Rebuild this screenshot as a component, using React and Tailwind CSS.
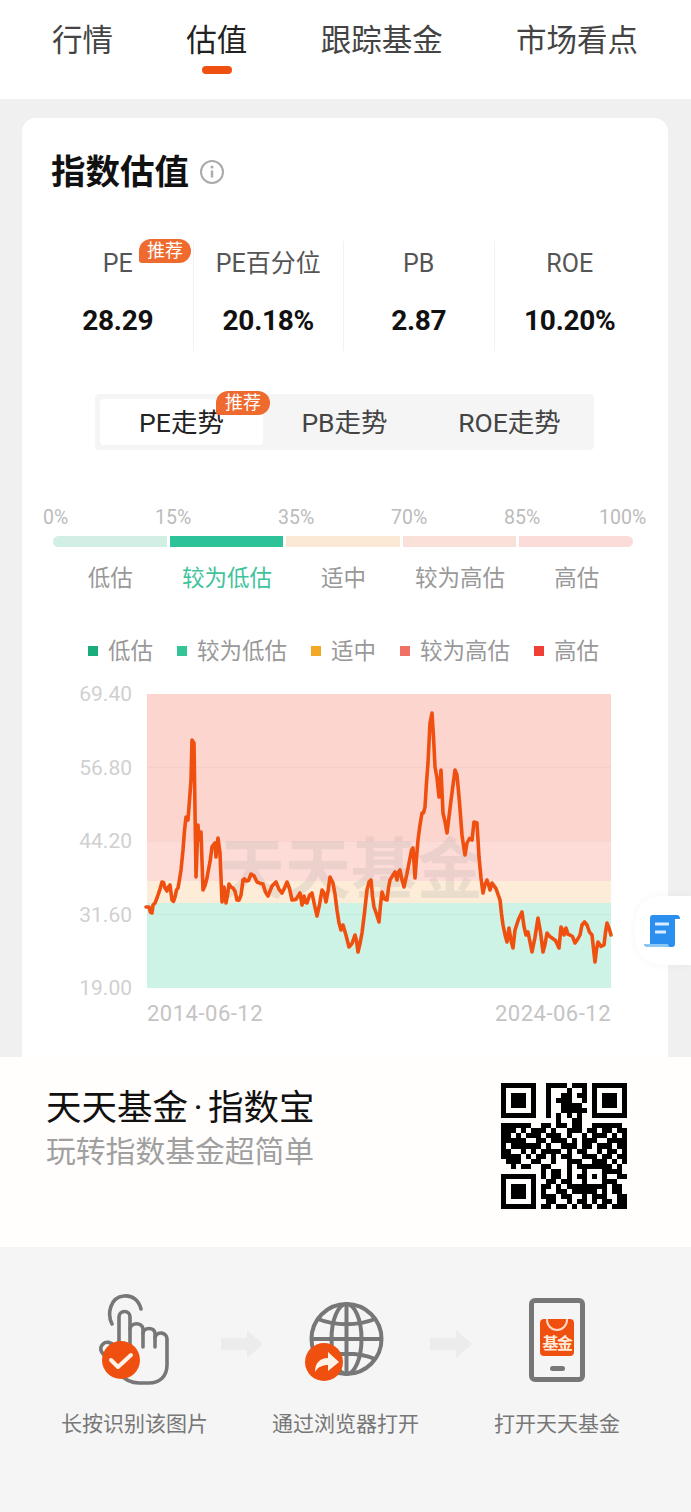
import React from 'react';

const font = "font-['Roboto','Noto_Sans_CJK_SC',sans-serif]";

const tabs = ['行情', '估值', '跟踪基金', '市场看点'];
const stats = [
    { label: 'PE', value: '28.29' },
    { label: 'PE百分位', value: '20.18%' },
    { label: 'PB', value: '2.87' },
    { label: 'ROE', value: '10.20%' },
];

const rawPoints = '146,907 149,907 152,913 153,905 157,898 162,882 165,888 167,891 170,885 172,900 175,897 178,888 181,870 183,850 186,817 188,820 191,780 192,740 194,743 196,877 198,825 199,840 201,832 203,890 207,878 208,872 212,847 215,843 216,857 218,838 220,853 222,902 224,887 226,903 229,884 233,888 237,900 241,895 243,880 246,881 251,874 257,882 263,884 268,896 276,882 282,893 287,882 292,900 300,893 302,905 304,896 307,903 312,893 317,916 322,890 326,902 330,877 333,883 337,910 341,930 343,925 349,947 355,935 358,952 362,933 367,890 371,880 374,907 379,922 382,892 387,900 390,880 395,872 397,880 400,870 404,887 410,858 413,848 415,878 418,840 422,813 425,807 428,763 430,723 432,713 435,767 437,778 439,797 441,770 443,813 447,833 455,770 457,775 462,835 465,855 467,843 472,840 474,822 477,823 479,857 483,893 487,880 490,890 492,883 500,900 503,925 507,942 509,928 513,948 515,930 522,912 526,935 528,932 532,952 538,918 543,952 547,933 552,938 559,948 561,927 564,935 566,928 570,935 575,943 580,935 582,925 587,925 592,935 595,962 598,942 604,945 607,923 611,935';

// break the longer segments up a little so the line looks like daily data
const linePoints = rawPoints
    .split(' ')
    .map((p) => p.split(',').map(Number))
    .flatMap(([x, y], i, all) => {
        const next = all[i + 1];
        if (!next || next[0] - x < 3) return [`${x},${y}`];
        const midY = (y + next[1]) / 2 + Math.sin(i * 2.3) * 3;
        return [`${x},${y}`, `${(x + next[0]) / 2},${midY.toFixed(1)}`];
    })
    .join(' ');

const F = ['1111111', '1000001', '1011101', '1011101', '1011101', '1000001', '1111111'];
const topMid = ['00111101110', '00100010010', '00100110110', '00101110010', '00100111100', '00100111110', '00101010100'];
const qrRows = [
    ...F.map((f, i) => f + topMid[i] + f),
    '0000000000010011000000000',
    '1111110011011011001111110',
    '1110101110100111011011011',
    '1101011101110100101110101',
    '1111100110111010111001111',
    '1011111101001110110111011',
    '1100101011110101100101101',
    '1111010110101100111011011',
    '0111001100100111001110101',
    '0010110011000101111111010',
    '0000000010110100100011110',
    F[0] + '0' + '10110101101010011',
    F[1] + '0' + '01101100100011100',
    F[2] + '0' + '11010111111110110',
    F[3] + '0' + '10011011111010110',
    F[4] + '0' + '11101100101110011',
    F[5] + '0' + '01100101101011011',
    F[6] + '0' + '11011010110110111',
];
const qrPath = qrRows
    .map((row, y) => row.split('').map((c, x) => (c === '1' ? `M${x} ${y}h1v1h-1z` : '')).join(''))
    .join('');

const Badge = ({ className }) => (
    <span className={`absolute flex items-center justify-center bg-[#ee6a2e] text-white text-[18px] leading-none rounded-[12px] rounded-bl-[3px] ${className}`}>
        推荐
    </span>
);

const Arrow = () => (
    <svg className="w-[42px] h-[28px]" viewBox="0 0 42 28">
        <path d="M0 8h26V0l16 14-16 14v-8H0z" fill="#ececec" />
    </svg>
);

const HandIcon = () => (
    <svg className="w-[78px] h-[94px]" viewBox="95 1295 78 94" fill="none">
        <g stroke="#777" strokeWidth="3.6" strokeLinecap="round" strokeLinejoin="round">
            <path d="M112 1325c-5-10-2-27 12-28 9-1 15 5 17 13" />
            <path d="M119 1350v-32a5.5 5.5 0 0 1 11 0v34" />
            <path d="M130 1330c1-7 12-7 13 0v18" />
            <path d="M143 1334c1-6 11-6 12 0v14" />
            <path d="M155 1338c2-6 12-5 12 2v26c0 12-8 18-18 18h-10c-8 0-14-3-19-9" />
            <path d="M109 1358c-7-2-11-8-6-13 3-3 8-2 12 2" />
        </g>
        <circle cx="121" cy="1361" r="19" fill="#f0500f" />
        <path d="M111 1361l7 7 13-12" stroke="#fff3e8" strokeWidth="4" strokeLinecap="round" strokeLinejoin="round" />
    </svg>
);

const GlobeIcon = () => (
    <svg className="w-[80px] h-[84px]" viewBox="304 1298 80 84" fill="none">
        <g stroke="#777" strokeWidth="4">
            <circle cx="346.500" cy="1338" r="35" />
            <ellipse cx="346.500" cy="1338" rx="15" ry="35" />
            <path d="M346.500 1303v70M311.500 1338h70M318 1318c17 7 40 7 57 0M318 1358c17-7 40-7 57 0" />
        </g>
        <circle cx="324" cy="1361" r="19" fill="#f0500f" />
        <path d="M315 1371c0-9 5-14 13-14v-6l11 10-11 9v-6c-6 0-10 2-13 7z" fill="#fff3e8" />
    </svg>
);

const PhoneIcon = () => (
    <div className="relative w-[56px] h-[84px] rounded-[6px] border-[5px] border-[#777] flex flex-col items-center">
        <div className="relative mt-[16px] w-[34px] h-[37px] rounded-[4px] bg-[#f0500f] overflow-hidden flex items-end justify-center">
            <span className="absolute top-[-10px] left-[6px] w-[22px] h-[22px] rounded-full border-[2px] border-[#ffd9c4]" />
            <span className="text-[16px] leading-[24px] font-bold text-[#ffe9d8] whitespace-nowrap tracking-[-1.500px]">基金</span>
        </div>
        <span className="mt-[10px] w-[15px] h-[5px] rounded-full bg-[#777]" />
    </div>
);

const App = () => {
    return (
        <div className={`relative w-[691px] h-[1512px] overflow-hidden bg-[#f0f0f0] ${font}`}>
            {/* Top tabs */}
            <div className="h-[99px] bg-white flex justify-between pl-[52px] pr-[53px] pt-[20px]">
                {tabs.map((tab) => (
                    <div key={tab} className="flex flex-col items-center">
                        <span className={`text-[30.500px] leading-[42px] ${tab === '估值' ? 'text-[#222]' : 'text-[#444]'}`}>{tab}</span>
                        {tab === '估值' && <span className="mt-[4px] w-[30px] h-[8px] rounded-full bg-[#f0500f]" />}
                    </div>
                ))}
            </div>

            {/* Card */}
            <div className="mt-[19px] ml-[22px] w-[646px] h-[939px] bg-white rounded-t-[14px] overflow-hidden">
                <div className="flex items-center gap-[10px] pl-[29px] pt-[31px]">
                    <h2 className="text-[34.500px] leading-[46px] font-bold text-[#111]">指数估值</h2>
                    <svg className="w-[26px] h-[26px]" viewBox="0 0 26 26" fill="none">
                        <circle cx="13" cy="13" r="11" stroke="#aaa" strokeWidth="2" />
                        <path d="M13 11.500v7" stroke="#aaa" strokeWidth="2.400" />
                        <circle cx="13" cy="8" r="1.500" fill="#aaa" />
                    </svg>
                </div>

                {/* Stats */}
                <div className="mt-[46px] ml-[21px] w-[602px] grid grid-cols-4 h-[110px]">
                    {stats.map((stat, i) => (
                        <div key={stat.label} className={`relative flex flex-col items-center pt-[6px] ${i < 3 ? 'border-r border-[#f2f2f2]' : ''}`}>
                            <span className="text-[25px] leading-[34px] text-[#555]">{stat.label}</span>
                            <span className="mt-[23px] text-[28px] leading-[34px] font-bold text-[#111] tracking-[-0.300px]">{stat.value}</span>
                            {i === 0 && <Badge className="top-[-2px] left-[96px] w-[52px] h-[24px]" />}
                        </div>
                    ))}
                </div>

                {/* Chart type switch */}
                <div className="relative mt-[43px] ml-[73px] w-[499px] h-[56px] bg-[#f5f5f5] rounded-[4px] p-[5px] grid grid-cols-3 text-[26.500px] text-[#444]">
                    <div className="bg-white rounded-[4px] flex items-center justify-center text-[#222] pt-[1px]">PE走势</div>
                    <div className="flex items-center justify-center pt-[1px]">PB走势</div>
                    <div className="flex items-center justify-center pt-[1px] pl-[4px]">ROE走势</div>
                    <Badge className="top-[-3px] left-[121px] w-[54px] h-[24px]" />
                </div>

                {/* Percent scale */}
                <div className="mt-[56px] ml-[21px] flex text-[19.500px] leading-[24px] text-[#bbb]">
                    <span className="w-[26px]">0%</span>
                    <span className="ml-[86px] w-[36px]">15%</span>
                    <span className="ml-[87px] w-[36px]">35%</span>
                    <span className="ml-[77px] w-[36px]">70%</span>
                    <span className="ml-[77px] w-[36px]">85%</span>
                    <span className="ml-[59px]">100%</span>
                </div>
                <div className="mt-[6px] ml-[31px] w-[580px] h-[11px] flex gap-[3px]">
                    <span className="flex-1 rounded-l-full bg-[#d1efe4]" />
                    <span className="flex-1 bg-[#2ec298]" />
                    <span className="flex-1 bg-[#fbe9d5]" />
                    <span className="flex-1 bg-[#f9e0d8]" />
                    <span className="flex-1 rounded-r-full bg-[#fbdcd8]" />
                </div>
                <div className="mt-[15px] ml-[30px] w-[583px] grid grid-cols-5 text-center text-[22.500px] leading-[32px] text-[#999]">
                    <span>低估</span>
                    <span className="text-[#3fc39c]">较为低估</span>
                    <span>适中</span>
                    <span>较为高估</span>
                    <span>高估</span>
                </div>

                {/* Legend */}
                <div className="mt-[41px] ml-[66px] flex gap-[24px] text-[22.500px] leading-[32px] text-[#999]">
                    {[
                        ['低估', 'bg-[#1bac7e]'],
                        ['较为低估', 'bg-[#33c497]'],
                        ['适中', 'bg-[#f2a926]'],
                        ['较为高估', 'bg-[#ef7065]'],
                        ['高估', 'bg-[#ee4035]'],
                    ].map(([label, color]) => (
                        <div key={label} className="flex items-center gap-[10px]">
                            <span className={`w-[10px] h-[10px] ${color}`} />
                            <span>{label}</span>
                        </div>
                    ))}
                </div>

                {/* Chart */}
                <div className="mt-[15px] flex">
                    <div className="w-[110px] h-[318px] flex flex-col justify-between items-end text-[21px] leading-[24px] text-[#d0d0d0]">
                        {['69.40', '56.80', '44.20', '31.60', '19.00'].map((v) => (
                            <span key={v}>{v}</span>
                        ))}
                    </div>
                    <div className="ml-[15px] w-[470px] mt-[12px]">
                        <div className="relative w-[470px] h-[294px]">
                            <svg className="absolute left-0 top-0 w-[470px] h-[294px] overflow-visible" viewBox="147 694 470 294" fill="none">
                                <rect x="147" y="694" width="464" height="147" fill="#fdd5cf" />
                                <rect x="147" y="841" width="464" height="40" fill="#fddcd8" />
                                <rect x="147" y="881" width="464" height="22" fill="#fcecd8" />
                                <rect x="147" y="903" width="464" height="85" fill="#cdf2e6" />
                                <path d="M147 767.500h464M147 841.500h464M147 914.500h464" stroke="#000" strokeOpacity="0.030" />
                            </svg>
                            <span className="absolute left-[72px] top-[142px] text-[66px] leading-[70px] font-bold text-[#8a8a8a]/15 whitespace-nowrap">天天基金</span>
                            <svg className="absolute left-0 top-0 w-[470px] h-[294px] overflow-visible" viewBox="147 694 470 294" fill="none">
                                <polyline points={linePoints} stroke="#ef5010" strokeWidth="3.600" strokeLinejoin="round" strokeLinecap="round" />
                            </svg>
                        </div>
                        <div className="mt-[13px] w-[464px] flex justify-between text-[22px] leading-[26px] text-[#c4c4c4] tracking-[0.500px]">
                            <span>2014-06-12</span>
                            <span>2024-06-12</span>
                        </div>
                    </div>
                </div>
            </div>

            {/* Promo */}
            <div className="h-[190px] bg-[#fffefc] flex justify-between pl-[46px] pr-[64px] pt-[28px]">
                <div>
                    <div className="text-[35.500px] leading-[46px] text-[#111] flex items-center">
                        <span>天天基金</span>
                        <span className="w-[20px] text-center">·</span>
                        <span>指数宝</span>
                    </div>
                    <div className="text-[29.800px] leading-[42px] text-[#a0a0a0]">玩转指数基金超简单</div>
                </div>
                <svg className="w-[126px] h-[126px] mt-[-2px]" viewBox="0 0 25 25" shapeRendering="crispEdges">
                    <path d={qrPath} fill="#000" />
                </svg>
            </div>

            {/* Steps */}
            <div className="h-[265px] bg-[#f5f5f5] relative">
                <div className="flex items-center pt-[50px] pl-[95px] h-[138px]">
                    <HandIcon />
                    <div className="ml-[48px] mt-[6px]"><Arrow /></div>
                    <div className="ml-[41px]"><GlobeIcon /></div>
                    <div className="ml-[46px] mt-[6px]"><Arrow /></div>
                    <div className="ml-[57px] mt-[-2px]"><PhoneIcon /></div>
                </div>
                <div className="mt-[24px] flex pl-[61px] text-[21px] leading-[30px] text-[#777]">
                    <span>长按识别该图片</span>
                    <span className="ml-[64px]">通过浏览器打开</span>
                    <span className="ml-[75px]">打开天天基金</span>
                </div>
            </div>

            {/* Floating button */}
            <div className="absolute right-0 top-[896px] w-[56px] h-[69px] bg-white rounded-l-[26px] shadow-[0_0_10px_rgba(0,0,0,0.04)] flex items-center pl-[9px]">
                <svg className="w-[36px] h-[34px]" viewBox="0 0 36 34">
                    <path d="M6 4a3 3 0 0 1 3-3h24c2 0 3 2 3 4h-5v25a3 3 0 0 1-3 3H4c-2 0-4-1-4-3h6z" fill="#2b8ff0" />
                    <path d="M0 30h24c0 2 1 3 3 3H4c-2 0-4-1-4-3z" fill="#8cc8f5" />
                    <path d="M11 10h14M11 18h11" stroke="#d7ecff" strokeWidth="3" />
                </svg>
            </div>
        </div>
    );
};

export default App;
